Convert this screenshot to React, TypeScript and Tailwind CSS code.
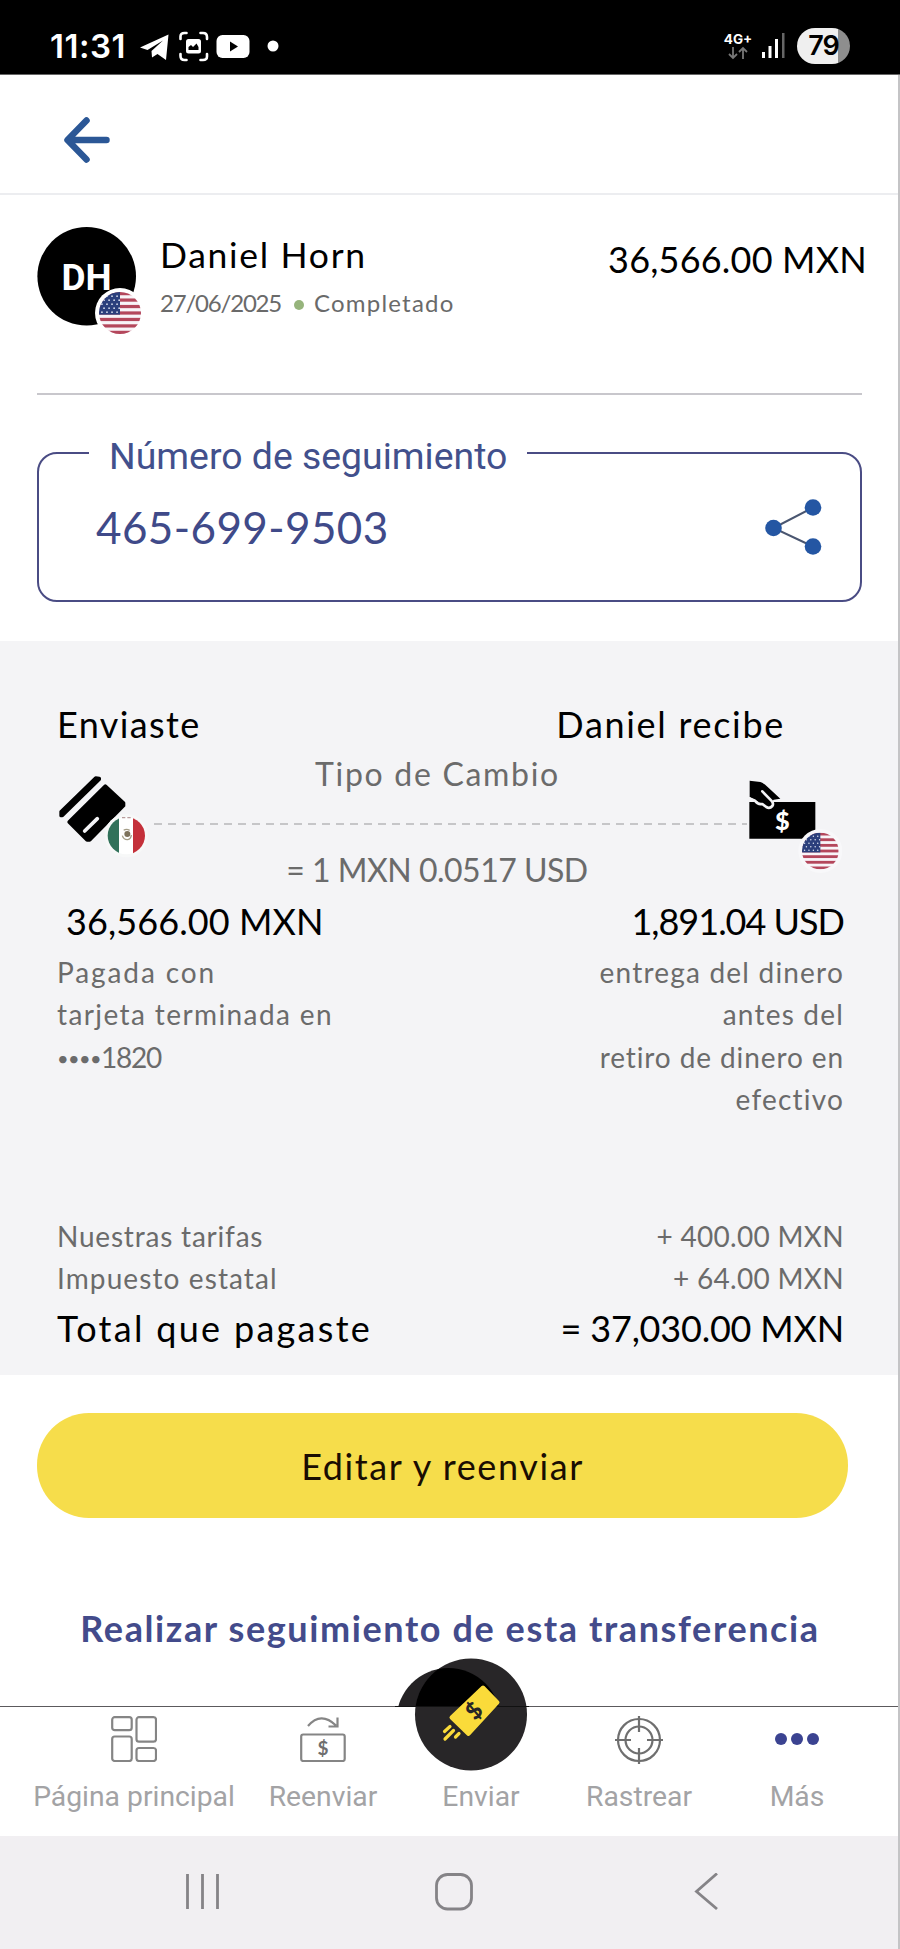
import React from "react";

interface FlagProps {
  cx: number;
  cy: number;
  r: number;
}

function UsFlag({ cx, cy, r }: FlagProps) {
  const id = `us-${cx}-${cy}`;
  const stripe = (r * 2) / 13;
  return (
    <g>
      <clipPath id={id}>
        <circle cx={cx} cy={cy} r={r} />
      </clipPath>
      <g clipPath={`url(#${id})`}>
        <rect x={cx - r} y={cy - r} width={r * 2} height={r * 2} fill="#f8f4f8" />
        {[0, 2, 4, 6, 8, 10, 12].map((i) => (
          <rect
            key={i}
            x={cx - r}
            y={cy - r + i * stripe}
            width={r * 2}
            height={stripe}
            fill="#b4475c"
          />
        ))}
        <rect x={cx - r} y={cy - r} width={r} height={stripe * 7} fill="#2b3f7c" />
        {[0, 1, 2, 3, 4].map((row) =>
          [0, 1, 2, 3].map((col) => (
            <circle
              key={`${row}-${col}`}
              cx={cx - r * 0.86 + col * r * 0.24 + (row % 2) * r * 0.1}
              cy={cy - r * 0.8 + row * r * 0.19}
              r={r * 0.04}
              fill="#dfe4f2"
            />
          ))
        )}
      </g>
    </g>
  );
}

function StatusBar() {
  return (
    <header className="flex h-[74px] items-center bg-black pl-[50px] pr-[50px] text-white">
      <span className="font-[Inter,sans-serif] text-[33px] font-semibold leading-none tracking-[0.5px] mt-[18px] w-[89px]">
        11:31
      </span>
      <svg className="mt-[18px]" width="140" height="34" viewBox="139 29 140 34">
        <path d="M140 47.5 168.5 34.5 166 60 157.5 54 152 57.5 151.5 51 163 40.5 147.5 50Z" fill="#fff" />
        <path
          d="M180.5 39v-2.500q0-3.500 4-3.500h2M200.500 33h2.500q4 0 4 4v2M207 54v2.500q0 3.500-4 3.500h-2.500M186.500 60h-2q-4 0-4-4v-2"
          fill="none"
          stroke="#fff"
          strokeWidth="2.600"
          strokeLinecap="round"
        />
        <rect x="186" y="39" width="15" height="14.500" rx="2.500" fill="#fff" />
        <path d="M188.500 50v-3l2.500-2 2 2 3.500-3.500 2 3.500v3Z" fill="#000" />
        <rect x="216.500" y="35" width="33" height="23" rx="6" fill="#fff" />
        <path d="M230 41.500v10l8-5Z" fill="#000" />
        <circle cx="273" cy="46" r="5.500" fill="#fff" />
      </svg>
      <div className="ml-auto mt-[18px] flex items-center">
        <div className="flex flex-col items-center w-[28px]">
          <span className="font-[Inter,sans-serif] text-[13.5px] font-bold leading-[14px]">
            4G+
          </span>
          <svg width="20" height="14" viewBox="0 0 20 14">
            <path
              d="M5 1v11M1 8l4 4 4-4M15 13V2M11 6l4-4 4 4"
              fill="none"
              stroke="#777"
              strokeWidth="1.8"
            />
          </svg>
        </div>
        <svg className="ml-[10px]" width="24" height="26" viewBox="0 0 24 26">
          <rect x="0" y="19" width="3" height="6" fill="#fff" />
          <rect x="6.500" y="13" width="3" height="12" fill="#fff" />
          <rect x="13" y="6" width="3" height="19" fill="#fff" />
          <rect x="20" y="0" width="2.500" height="25" fill="#666" />
        </svg>
        <div className="ml-[11px] flex h-9 w-[53px] items-center justify-center overflow-hidden rounded-full bg-[linear-gradient(to_right,#efefef_78%,#8e8e8e_78%)] font-[Inter,sans-serif] text-[27px] font-semibold tracking-[-1px] text-black">
          79
        </div>
      </div>
    </header>
  );
}

function Person() {
  return (
    <section className="flex h-[167px] items-start">
      <svg width="108" height="112" viewBox="37 226 108 112">
        <circle cx="86.700" cy="276.300" r="49.300" fill="#000" />
        <text
          x="86.500"
          y="290"
          textAnchor="middle"
          fill="#fff"
          fontFamily="Roboto, sans-serif"
          fontWeight="700"
          fontSize="37"
        >
          DH
        </text>
        <circle cx="120" cy="313" r="25" fill="#fff" />
        <UsFlag cx={120} cy={313} r={21} />
      </svg>
      <div className="ml-[15px] pt-[7px]">
        <h1 className="h-11 text-[35.5px] leading-[44px] tracking-[1.7px] text-black">
          Daniel Horn
        </h1>
        <p className="mt-[11px] flex h-[30px] items-center text-[24px] leading-[30px] text-[#6a6a6a]">
          <span className="tracking-[-1.2px]">27/06/2025</span>
          <span className="ml-[13px] mr-[10px] mt-1 h-[10px] w-[10px] rounded-full bg-[#96b47c]" />
          <span className="tracking-[1.2px]">Completado</span>
        </p>
      </div>
      <p className="-mr-[5px] ml-auto pt-[11px] text-[36px] leading-[44px] tracking-[0.2px]">
        36,566.00 MXN
      </p>
    </section>
  );
}

function Tracking() {
  return (
    <fieldset className="mt-[33px] h-[174px] rounded-[20px] border-2 border-[#4a4c84] pl-[50px] pr-[37px]">
      <legend className="px-5 pt-[6px] font-[Roboto,sans-serif] text-[37.4px] leading-[44px] text-[#42508c]">
        Número de seguimiento
      </legend>
      <div className="flex items-center justify-between pl-[7px] pt-5">
        <span className="text-[44px] leading-[56px] tracking-[0.4px] text-[#3f4a89]">
          465-699-9503
        </span>
        <svg width="58" height="58" viewBox="765 498 58 58">
          <path d="M813 507.500 773.500 528 813 546.500" fill="none" stroke="#4a5670" strokeWidth="2" />
          <circle cx="773.500" cy="528" r="8.300" fill="#2456a3" />
          <circle cx="813" cy="507.500" r="8.300" fill="#2456a3" />
          <circle cx="813" cy="546.500" r="8.300" fill="#2456a3" />
        </svg>
      </div>
    </fieldset>
  );
}

function CardIcon() {
  return (
    <svg className="mt-[27px]" width="94" height="87" viewBox="170 280 282 261">
      <g stroke="#000" strokeWidth="10" strokeLinejoin="round">
        <path d="M182 396 286 295 297 296 297 299 186 408 182 408Z" />
        <path d="M315 319 370 370 370 378 268 481 260 481 206 427Z" />
      </g>
      <path d="M253 454 291 417" stroke="#f4f4f6" strokeWidth="11" strokeLinecap="round" />
      <circle cx="378" cy="468" r="65" fill="#f7f8f8" />
      <clipPath id="mx">
        <circle cx="378" cy="468" r="56" />
      </clipPath>
      <g clipPath="url(#mx)">
        <rect x="320" y="410" width="120" height="120" fill="#fff" />
        <rect x="320" y="410" width="36" height="120" fill="#31715a" />
        <rect x="398" y="410" width="42" height="120" fill="#c4303a" />
      </g>
      <circle cx="381" cy="463" r="9" fill="#7d725c" />
      <path d="M366 468q4 13 16 12 10-2 11-14M370 452q8-6 18 0" fill="none" stroke="#a39c86" strokeWidth="4" />
      <path d="M365 414h28" stroke="#b89c9c" strokeWidth="4" strokeDasharray="10 6" />
    </svg>
  );
}

function CashIcon() {
  return (
    <svg className="mt-8 mr-[2px]" width="95" height="95" viewBox="890 295 285 285">
      <path d="M897 367H1095V477H897Z" />
      <g transform="translate(870 270)">
        <path d="M28 33 60 37Q72 41 82 52L120 87 100 90 85 105 55 97 28 82Z" />
        <path
          d="M26 86 44 93Q53 106 66 103L78 112Q88 118 96 109 101 101 93 93L66 65"
          fill="none"
          stroke="#f4f4f6"
          strokeWidth="8"
          strokeLinecap="round"
          strokeLinejoin="round"
        />
      </g>
      <text
        x="996"
        y="450"
        textAnchor="middle"
        fill="#fff"
        fontFamily="Lato, sans-serif"
        fontWeight="900"
        fontSize="76"
      >
        $
      </text>
      <circle cx="1110" cy="514" r="66" fill="#f8f8fa" />
      <UsFlag cx={1110} cy={514} r={55} />
    </svg>
  );
}

function Summary() {
  return (
    <section className="mt-[39px] h-[734px] bg-[#f4f4f6] pl-[57px] pr-14 pt-[61px]">
      <div className="flex justify-between pr-[59px] text-[36px] leading-[44px]">
        <h2 className="tracking-[1.4px]">Enviaste</h2>
        <h2 className="tracking-[1.7px]">Daniel recibe</h2>
      </div>
      <div className="flex h-[146px] items-start">
        <CardIcon />
        <div className="flex-1 pt-[8px] text-center text-[32px] leading-10 text-[#6b6b6b]">
          <p className="pr-[23px] tracking-[1.7px]">Tipo de Cambio</p>
          <div className="mt-[29px] -ml-[3px] h-[2px] bg-[repeating-linear-gradient(to_right,transparent_0_6px,#c6c6c8_6px_14px)]" />
          <p className="mt-[25px] pr-[24px] tracking-[-0.5px]">= 1 MXN 0.0517 USD</p>
        </div>
        <CashIcon />
      </div>
      <div className="mt-[7px] flex justify-between text-[36px] leading-[44px]">
        <p className="pl-[9px] tracking-[0.1px]">36,566.00 MXN</p>
        <p className="tracking-[-1px]">1,891.04 USD</p>
      </div>
      <div className="mt-[8px] flex h-[264px] justify-between text-[28px] leading-[42.4px] text-[#6b6b6b]">
        <p className="tracking-[1.4px]">
          <span className="tracking-[1.9px]">Pagada con</span>
          <br />
          tarjeta terminada en
          <br />
          <span className="relative -top-[2px] text-[20px] tracking-[-0.6px]">••••</span>
          <span className="tracking-[-1.2px]">1820</span>
        </p>
        <p className="text-right tracking-[1.2px]">
          entrega del dinero
          <br />
          antes del
          <br />
          <span className="tracking-[0.9px]">retiro de dinero en</span>
          <br />
          efectivo
        </p>
      </div>
      <div className="flex justify-between text-[28px] leading-[42.4px] text-[#6b6b6b]">
        <p className="tracking-[0.8px]">Nuestras tarifas</p>
        <p className="tracking-[0.3px]">+ 400.00 MXN</p>
      </div>
      <div className="flex justify-between text-[28px] leading-[42.4px] text-[#6b6b6b]">
        <p className="tracking-[1.1px]">Impuesto estatal</p>
        <p className="tracking-[0.3px]">+ 64.00 MXN</p>
      </div>
      <div className="mt-[6px] flex justify-between text-[36px] leading-[44px]">
        <p className="tracking-[2.3px]">Total que pagaste</p>
        <p className="tracking-[-0.2px]">= 37,030.00 MXN</p>
      </div>
    </section>
  );
}

interface TabProps {
  label: string;
  className?: string;
  children?: React.ReactNode;
}

function Tab({ label, className = "w-[158px]", children }: TabProps) {
  return (
    <div className={`flex flex-col items-center ${className}`}>
      <div className="flex h-[63px] items-center justify-center">{children}</div>
      <span className="mt-[9px] whitespace-nowrap font-[Roboto,sans-serif] text-[28.3px] leading-9 text-[#a3a3a5]">
        {label}
      </span>
    </div>
  );
}

function SendButton() {
  return (
    <svg
      className="absolute left-[395px] -top-[51px]"
      width="134"
      height="116"
      viewBox="395 1656 134 116"
    >
      <clipPath id="above-bar">
        <rect x="395" y="1656" width="134" height="51" />
      </clipPath>
      <clipPath id="send-disc">
        <circle cx="471" cy="1714.500" r="56" />
      </clipPath>
      <g clipPath="url(#above-bar)">
        <circle cx="448.500" cy="1720" r="52" fill="#242224" />
      </g>
      <circle cx="471" cy="1714.500" r="56" fill="#282628" />
      <g clipPath="url(#above-bar)">
        <circle cx="448.500" cy="1720" r="52" fill="#000" clipPath="url(#send-disc)" />
      </g>
      <path d="M395 1706.500H529" stroke="#111" />
      <path
        d="M483 1687.500 497.500 1702.500 468.500 1734 451.500 1717.500Z"
        fill="#fadb3a"
        stroke="#fadb3a"
        strokeWidth="4"
        strokeLinejoin="round"
      />
      <text
        transform="translate(474 1711) rotate(-45)"
        x="0"
        y="8"
        textAnchor="middle"
        fill="#282628"
        fontFamily="Lato, sans-serif"
        fontWeight="900"
        fontSize="23"
      >
        $
      </text>
      <path
        d="M450 1726.500 444.500 1731.500M453.500 1730.500 445 1739M459 1733.500 455.500 1737"
        stroke="#fadb3a"
        strokeWidth="3.200"
        strokeLinecap="round"
      />
    </svg>
  );
}

function TabBar() {
  return (
    <nav className="relative mt-14 flex h-[130px] border-t border-[#5c5a5d] bg-white pl-6">
      <Tab label="Página principal" className="w-[220px]">
        <svg width="46" height="46" viewBox="0 0 46 46" fill="none" stroke="#858585" strokeWidth="2.200">
          <rect x="1.200" y="1.200" width="19.500" height="13" rx="2.500" />
          <rect x="25.500" y="1.200" width="19.500" height="24.500" rx="2.500" />
          <rect x="1.200" y="20.500" width="19.500" height="24.500" rx="2.500" />
          <rect x="25.500" y="32" width="19.500" height="13" rx="2.500" />
        </svg>
      </Tab>
      <Tab label="Reenviar">
        <svg width="46" height="46" viewBox="0 0 46 46" fill="none" stroke="#858585" strokeWidth="2.200">
          <rect x="1.200" y="18.500" width="43.500" height="26.500" rx="2" />
          <path d="M8 10Q21-5 36 9.500M37.500 1.500V10.500H28.500" />
          <text
            x="23"
            y="38.500"
            textAnchor="middle"
            fill="#6f6f6f"
            stroke="none"
            fontFamily="Lato, sans-serif"
            fontWeight="700"
            fontSize="19"
          >
            $
          </text>
        </svg>
      </Tab>
      <Tab label="Enviar" />
      <Tab label="Rastrear">
        <svg className="mt-[2px]" width="48" height="48" viewBox="0 0 48 48" fill="none" stroke="#6f6f6f" strokeWidth="2.200">
          <circle cx="24" cy="24" r="21" />
          <circle cx="24" cy="24" r="13.500" />
          <path d="M24 0V16M24 32V48M0 24H16M32 24H48" />
        </svg>
      </Tab>
      <Tab label="Más">
        <div className="flex gap-1">
          <span className="h-3 w-3 rounded-full bg-[#3b4391]" />
          <span className="h-3 w-3 rounded-full bg-[#3b4391]" />
          <span className="h-3 w-3 rounded-full bg-[#3b4391]" />
        </div>
      </Tab>
      <SendButton />
    </nav>
  );
}

function SystemNav() {
  return (
    <footer className="flex h-[113px] items-start bg-[#f1eff2] pl-[185px] pt-[37px]">
      <svg width="535" height="38" viewBox="185 1873 535 38" fill="none" stroke="#858387" strokeWidth="2.800">
        <path d="M187.500 1874V1909M202.500 1874V1909M217.500 1874V1909" />
        <rect x="436.500" y="1874.500" width="35" height="34.500" rx="11" />
        <path d="M717 1873.500 696.500 1891.500 717 1909" />
      </svg>
    </footer>
  );
}

export default function App() {
  return (
    <div className="relative h-[1949px] w-[900px] overflow-hidden bg-white font-[Lato,sans-serif] text-black">
      <StatusBar />
      <div className="flex h-[121px] items-center border-b-2 border-t border-b-[#ecedf0] border-t-[#666] pl-[63px]">
        <svg className="mt-[11px]" width="48" height="48" viewBox="0 0 48 48">
          <path
            d="M23.500 4.500 4.500 24 23.500 43.500M5 24H43.500"
            fill="none"
            stroke="#2b5796"
            strokeWidth="6.500"
            strokeLinecap="round"
            strokeLinejoin="round"
          />
        </svg>
      </div>
      <div className="ml-[37px] mr-[38px] pt-[31px]">
        <Person />
        <hr className="h-0 border-t-2 border-[#c8c7cc]" />
        <Tracking />
      </div>
      <Summary />
      <button className="ml-[37px] mt-[38px] block h-[105px] w-[811px] rounded-[52px] bg-[#f6dd4b] text-[36px] leading-[44px] tracking-[1.6px] text-[#1a0d02]">
        Editar y reenviar
      </button>
      <p className="mt-[88px] text-center text-[36px] font-bold leading-[44px] tracking-[1.6px] text-[#434b8b]">
        Realizar seguimiento de esta transferencia
      </p>
      <TabBar />
      <SystemNav />
      {/* thin edge down the right side of the screen */}
      <div className="absolute bottom-0 right-0 top-[75px] w-[2px] bg-[#c4c4c6]" />
    </div>
  );
}
